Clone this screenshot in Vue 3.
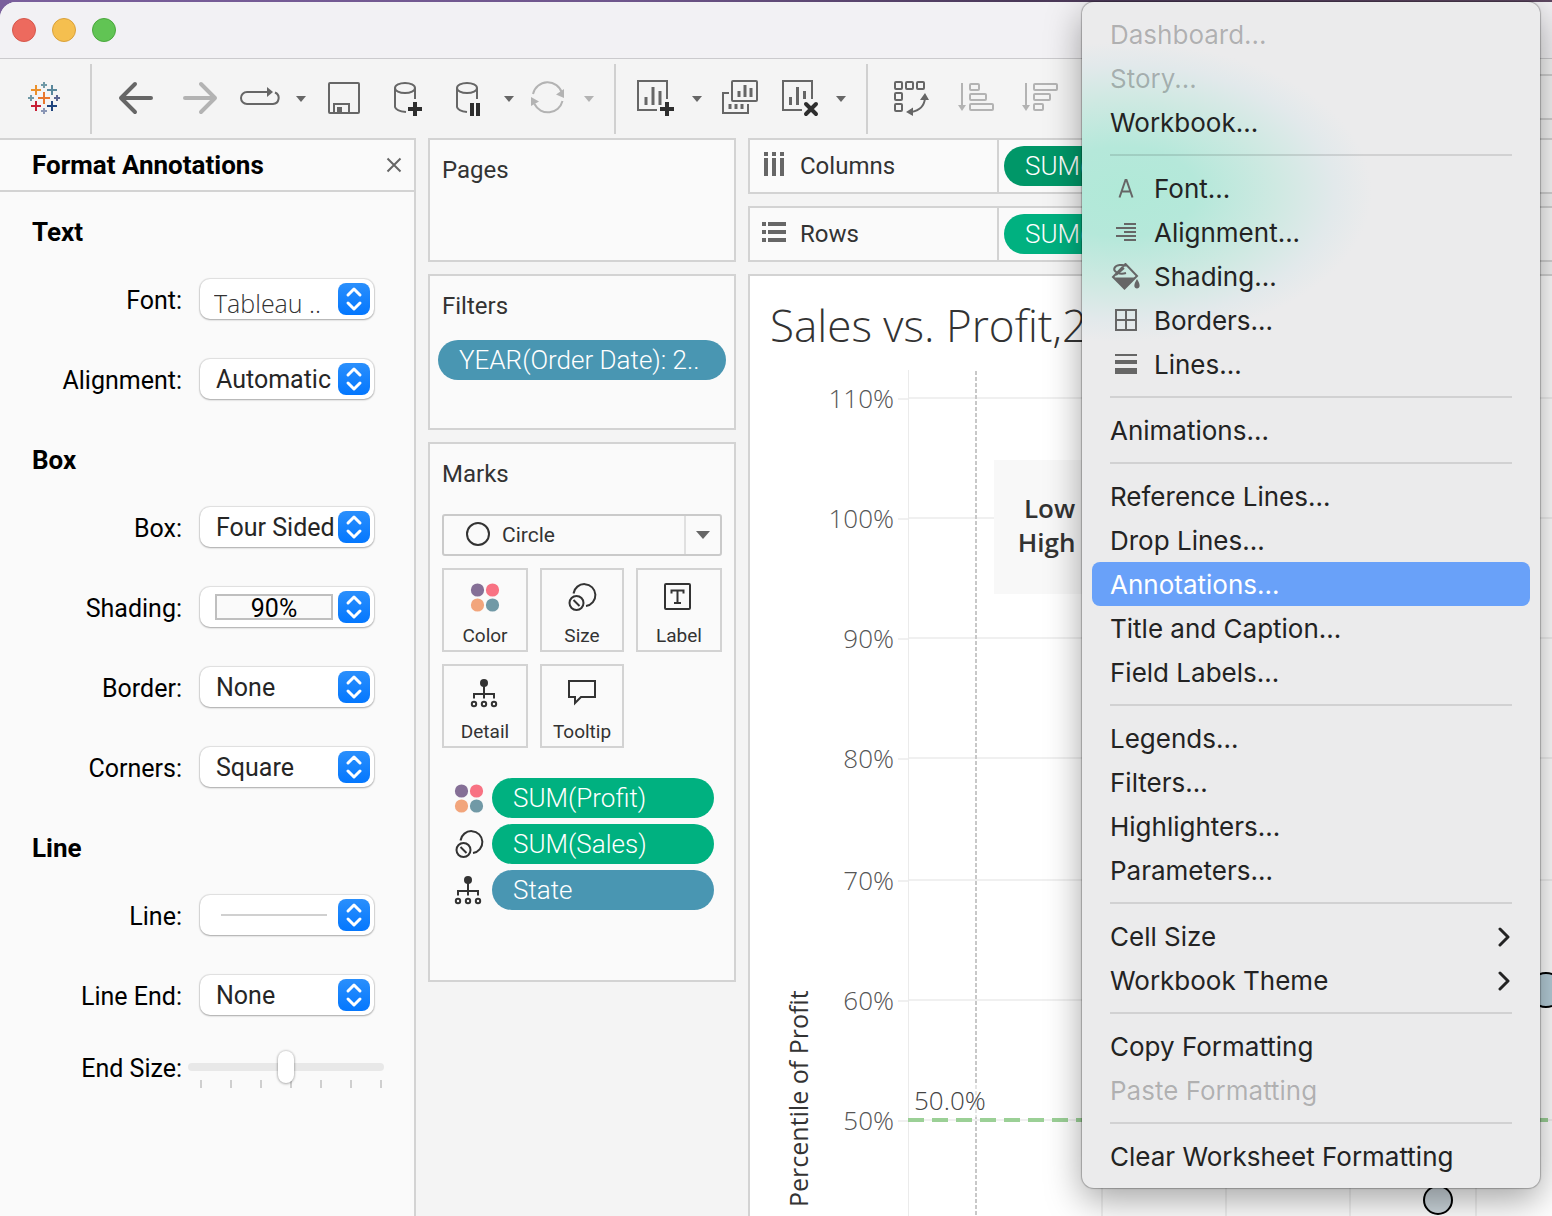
<script setup>
import { ref } from 'vue'

const CARET = 'M0 0h10l-5 6z'

const sections = [
  {
    title: 'Text',
    rows: [
      { id: 'font', label: 'Font:', value: 'Tableau ..', kind: 'face' },
      { id: 'alignment', label: 'Alignment:', value: 'Automatic' },
    ],
  },
  {
    title: 'Box',
    rows: [
      { id: 'box', label: 'Box:', value: 'Four Sided' },
      { id: 'shading', label: 'Shading:', value: '90%', kind: 'swatch' },
      { id: 'border', label: 'Border:', value: 'None' },
      { id: 'corners', label: 'Corners:', value: 'Square' },
    ],
  },
  {
    title: 'Line',
    rows: [
      { id: 'line', label: 'Line:', value: '', kind: 'stroke' },
      { id: 'line-end', label: 'Line End:', value: 'None' },
    ],
  },
]

const endSize = ref(50)

const markButtons = ['Color', 'Size', 'Label', 'Detail', 'Tooltip']

const markPills = [
  { icon: 'Color', text: 'SUM(Profit)', tone: 'green' },
  { icon: 'Size', text: 'SUM(Sales)', tone: 'green' },
  { icon: 'Detail', text: 'State', tone: 'blue' },
]

const percentAxis = [
  { label: '110%', y: 398 },
  { label: '100%', y: 518 },
  { label: '90%', y: 638 },
  { label: '80%', y: 758 },
  { label: '70%', y: 880 },
  { label: '60%', y: 1000 },
  { label: '50%', y: 1120 },
]
const verticalGrid = [1102, 1226, 1350, 1476]

const menu = [
  [
    { text: 'Dashboard...', disabled: true },
    { text: 'Story...', disabled: true },
    { text: 'Workbook...' },
  ],
  [
    { text: 'Font...', icon: 'font' },
    { text: 'Alignment...', icon: 'align' },
    { text: 'Shading...', icon: 'shade' },
    { text: 'Borders...', icon: 'border' },
    { text: 'Lines...', icon: 'lines' },
  ],
  [{ text: 'Animations...' }],
  [
    { text: 'Reference Lines...' },
    { text: 'Drop Lines...' },
    { text: 'Annotations...', active: true },
    { text: 'Title and Caption...' },
    { text: 'Field Labels...' },
  ],
  [
    { text: 'Legends...' },
    { text: 'Filters...' },
    { text: 'Highlighters...' },
    { text: 'Parameters...' },
  ],
  [
    { text: 'Cell Size', submenu: true },
    { text: 'Workbook Theme', submenu: true },
  ],
  [{ text: 'Copy Formatting' }, { text: 'Paste Formatting', disabled: true }],
  [{ text: 'Clear Worksheet Formatting' }],
]
</script>

<template>
  <div class="desktop">
    <svg class="defs" aria-hidden="true">
      <symbol id="mark-Color" viewBox="0 0 30 30">
        <circle cx="7.500" cy="8" r="6.600" fill="#856f96" />
        <circle cx="22.500" cy="8" r="6.600" fill="#f87283" />
        <circle cx="7.500" cy="23" r="6.600" fill="#f2a57c" />
        <circle cx="22.500" cy="23" r="6.600" fill="#7199a6" />
      </symbol>
      <symbol id="mark-Size" viewBox="0 0 30 30">
        <g fill="none" stroke="currentColor" stroke-width="2">
          <path d="M6.500 11.500A11 11 0 1 1 19 24" />
          <circle cx="9.500" cy="21" r="7" />
          <path d="M6.500 18l6 6" />
        </g>
      </symbol>
      <symbol id="mark-Label" viewBox="0 0 30 30">
        <g fill="none" stroke="currentColor" stroke-width="2">
          <rect x="1" y="2" width="25" height="25" rx="1" />
          <path d="M7.500 11.500v-3h12v3M13.500 8.500v12M10 21h7" />
        </g>
      </symbol>
      <symbol id="mark-Detail" viewBox="0 0 30 30">
        <circle cx="14" cy="5" r="4" fill="currentColor" />
        <g fill="none" stroke="currentColor" stroke-width="2">
          <path d="M14 8v12.500M4 20.500v-4.500h20v4.500" />
          <circle cx="4" cy="26" r="2.200" />
          <circle cx="14" cy="26" r="2.200" />
          <circle cx="24" cy="26" r="2.200" />
        </g>
      </symbol>
      <symbol id="mark-Tooltip" viewBox="0 0 30 30">
        <path d="M2 3h26v16H14l-6 6v-6H2z" fill="none" stroke="currentColor" stroke-width="2" />
      </symbol>
    </svg>

    <div class="window">
      <header class="titlebar">
        <button class="light red" aria-label="Close"></button>
        <button class="light yellow" aria-label="Minimize"></button>
        <button class="light green-light" aria-label="Zoom"></button>
      </header>

      <nav class="toolbar" aria-label="Toolbar">
        <button aria-label="Start page">
          <svg width="46" height="40" viewBox="28 79 46 40" fill="none" stroke-width="2">
            <path d="M38 98h12M44 92v12" stroke="#e8762c" />
            <path d="M31 90h10M36 85v10" stroke="#eb912c" />
            <path d="M47 90h10M52 85v10" stroke="#59879b" />
            <path d="M31 106h10M36 101v10" stroke="#c72035" />
            <path d="M47 106h10M52 101v10" stroke="#1f447e" />
            <path d="M41 85h6M44 82v6M28 98h6M31 95v6" stroke="#7099a6" />
            <path d="M41 111h6M44 108v6" stroke="#8a96b5" />
            <path d="M54 98h6M57 95v6" stroke="#5b6591" />
          </svg>
        </button>
        <span class="divider"></span>
        <button aria-label="Undo">
          <svg width="54" height="40" viewBox="108 79 54 40" class="line thick">
            <path d="M151 98H121M135 84l-14 14 14 14" />
          </svg>
        </button>
        <button aria-label="Redo" class="faded">
          <svg width="46" height="40" viewBox="178 79 46 40" class="line thick">
            <path d="M185 98h30M201 84l14 14-14 14" />
          </svg>
        </button>
        <button aria-label="Replay animation">
          <svg width="40" height="40" viewBox="240 79 40 40" class="line">
            <path d="M268 92h-21a6 6 0 0 0 0 12h26a6 6 0 0 0 2-11.500" />
            <path d="M267 87l6 5-6 5z" class="solid" />
          </svg>
        </button>
        <button aria-label="Replay options">
          <svg width="10" height="40" viewBox="0 -17 10 40"><path :d="CARET" class="solid" /></svg>
        </button>
        <button aria-label="Save">
          <svg width="44" height="40" viewBox="322 79 44 40" class="line">
            <rect x="329" y="83" width="30" height="30" rx="1" />
            <path d="M334 113v-9h15v9" />
            <path d="M337 107h5v5h-5z" class="solid" />
          </svg>
        </button>
        <button aria-label="New data source">
          <svg width="48" height="40" viewBox="382 79 48 40" class="line">
            <ellipse cx="405" cy="88" rx="10" ry="5" />
            <path d="M395 88v19q1 4 11 5M415 88v11" />
            <path d="M408 109h14M415 102v14" class="badge" />
          </svg>
        </button>
        <button aria-label="Pause auto updates">
          <svg width="42" height="40" viewBox="446 79 42 40" class="line">
            <ellipse cx="467" cy="88" rx="10" ry="5" />
            <path d="M457 88v19q1 4 10 5M477 88v11" />
            <path d="M472 103v13M478 103v13" class="badge" />
          </svg>
        </button>
        <button aria-label="Auto update options">
          <svg width="10" height="40" viewBox="0 -17 10 40"><path :d="CARET" class="solid" /></svg>
        </button>
        <button aria-label="Run update" class="faded">
          <svg width="38" height="40" viewBox="530 79 38 40" class="line">
            <path d="M533 94a15 15 0 0 1 29-1M562.500 101a15 15 0 0 1-28 3" />
            <path d="M564 89v9l-8-3.500zM531 97v9l8-4.500z" class="solid" />
          </svg>
        </button>
        <button aria-label="Update options" class="faded">
          <svg width="14" height="40" viewBox="0 -17 14 40"><path :d="CARET" class="solid" /></svg>
        </button>
        <span class="divider"></span>
        <button aria-label="New worksheet">
          <svg width="44" height="40" viewBox="632 79 44 40" class="line">
            <path d="M657 110h-19V81h29v18" />
            <path d="M646 97v8M653 87v18M660 91v14" class="bars" />
            <path d="M660 109h14M667 102v14" class="badge" />
          </svg>
        </button>
        <button aria-label="New worksheet options">
          <svg width="10" height="40" viewBox="0 -17 10 40"><path :d="CARET" class="solid" /></svg>
        </button>
        <button aria-label="Duplicate sheet">
          <svg width="46" height="40" viewBox="718 79 46 40" class="line">
            <rect x="732" y="81" width="25" height="20" rx="1" />
            <path d="M739 91v6M745 85v12M751 88v9M730 104v5M736 104v5M742 104v5" class="bars" />
            <path d="M729 93h-6v20h25v-9" />
          </svg>
        </button>
        <button aria-label="Clear sheet">
          <svg width="40" height="40" viewBox="780 79 40 40" class="line">
            <path d="M802 110h-19V81h29v18" />
            <path d="M790.500 97v8M797.500 87v18M804.500 91v8" class="bars" />
            <path d="M806 104l10 10M816 104l-10 10" class="badge round" />
          </svg>
        </button>
        <button aria-label="Clear options">
          <svg width="14" height="40" viewBox="0 -17 14 40"><path :d="CARET" class="solid" /></svg>
        </button>
        <span class="divider"></span>
        <button aria-label="Swap rows and columns">
          <svg width="54" height="40" viewBox="884 79 54 40" class="line">
            <rect x="895" y="82" width="7" height="7" rx="1" />
            <rect x="906" y="82" width="7" height="7" rx="1" />
            <rect x="917" y="82" width="7" height="7" rx="1" />
            <rect x="895" y="93" width="7" height="7" rx="1" />
            <rect x="895" y="104" width="7" height="7" rx="1" />
            <path d="M911 112q13-2 14-14" />
            <path d="M925 93l4 7h-9zM906 112l7-4.500v8.500z" class="solid" />
          </svg>
        </button>
        <button aria-label="Sort ascending" class="faded">
          <svg width="44" height="40" viewBox="954 79 44 40" class="line">
            <path d="M962 83v23" />
            <path d="M958 105h8l-4 6z" class="solid" />
            <rect x="970" y="84" width="9" height="6" rx="1" />
            <rect x="970" y="94" width="16" height="6" rx="1" />
            <rect x="970" y="104" width="23" height="6" rx="1" />
          </svg>
        </button>
        <button aria-label="Sort descending" class="faded">
          <svg width="48" height="40" viewBox="1014 79 48 40" class="line">
            <path d="M1026 83v23" />
            <path d="M1022 105h8l-4 6z" class="solid" />
            <rect x="1034" y="84" width="23" height="6" rx="1" />
            <rect x="1034" y="94" width="16" height="6" rx="1" />
            <rect x="1034" y="104" width="9" height="6" rx="1" />
          </svg>
        </button>
        <span class="fit-box"></span>
      </nav>

      <main class="workspace">
        <aside class="format-panel">
          <div class="panel-head">
            <h1>Format Annotations</h1>
            <button aria-label="Close panel">
              <svg width="16" height="16" viewBox="0 0 16 16" fill="none" stroke="#666" stroke-width="2">
                <path d="M1.500 1.500l13 13M14.500 1.500l-13 13" />
              </svg>
            </button>
          </div>
          <section v-for="s in sections" :key="s.title">
            <h2>{{ s.title }}</h2>
            <div v-for="r in s.rows" :key="r.id" class="field">
              <label :for="r.id">{{ r.label }}</label>
              <span class="popup" :class="r.kind">
                <select :id="r.id">
                  <option>{{ r.value }}</option>
                </select>
                <svg class="stepper" width="32" height="32" viewBox="0 0 32 32" aria-hidden="true">
                  <path d="M10 12l6-6 6 6M10 20l6 6 6-6" />
                </svg>
              </span>
            </div>
          </section>
          <div class="field slider-field">
            <label for="end-size">End Size:</label>
            <span class="slider">
              <input id="end-size" v-model="endSize" type="range" min="0" max="100" />
              <span class="ticks" aria-hidden="true"><i v-for="n in 7" :key="n"></i></span>
            </span>
          </div>
        </aside>

        <div class="cards">
          <section class="card pages"><h3>Pages</h3></section>
          <section class="card filters">
            <h3>Filters</h3>
            <button class="pill blue">YEAR(Order Date): 2..</button>
          </section>
          <section class="card marks">
            <h3>Marks</h3>
            <div class="mark-type">
              <svg width="26" height="26" viewBox="0 0 26 26" aria-hidden="true">
                <circle cx="13" cy="12" r="11" fill="none" stroke="#333" stroke-width="2" />
              </svg>
              <select aria-label="Mark type">
                <option>Circle</option>
              </select>
              <span class="drop" aria-hidden="true">
                <svg width="14" height="8" viewBox="0 0 14 8"><path d="M0 0h14l-7 8z" fill="#666" /></svg>
              </span>
            </div>
            <div class="mark-grid">
              <button v-for="m in markButtons" :key="m">
                <svg width="30" height="30" aria-hidden="true"><use :href="'#mark-' + m" /></svg>
                {{ m }}
              </button>
            </div>
            <ul class="mark-pills">
              <li v-for="p in markPills" :key="p.text">
                <svg width="30" height="30" aria-hidden="true"><use :href="'#mark-' + p.icon" /></svg>
                <button class="pill" :class="p.tone">{{ p.text }}</button>
              </li>
            </ul>
          </section>
        </div>

        <div class="canvas">
          <section class="shelf">
            <h3>
              <svg width="26" height="28" viewBox="0 0 26 28" fill="#666" aria-hidden="true">
                <path d="M2 0h4v4H2zM10 0h4v4h-4zM18 0h4v4h-4zM2 6h4v18H2zM10 6h4v18h-4zM18 6h4v18h-4z" />
              </svg>
              Columns
            </h3>
            <button class="pill green dim">SUM(Sales)</button>
          </section>
          <section class="shelf">
            <h3>
              <svg width="26" height="28" viewBox="0 0 26 28" fill="#666" aria-hidden="true">
                <path d="M0 2h4v4H0zM0 10h4v4H0zM0 18h4v4H0zM6 2h18v4H6zM6 10h18v4H6zM6 18h18v4H6z" />
              </svg>
              Rows
            </h3>
            <button class="pill green">SUM(Profit)</button>
          </section>
          <section class="sheet">
            <h2>Sales vs. Profit,2019</h2>
            <svg class="plot" role="img" aria-label="Sales vs. Profit scatter plot">
              <g transform="translate(-750 -370)">
                <path d="M908.500 370V1400" stroke="#ebebeb" />
                <g stroke="#f0f0f0" stroke-width="2">
                  <path v-for="t in percentAxis" :key="t.y" :d="`M898 ${t.y + 1}h10M909 ${t.y}H2600`" />
                  <path v-for="x in verticalGrid" :key="x" :d="`M${x} 370V1400`" />
                </g>
                <text v-for="t in percentAxis" :key="t.label" x="894" :y="t.y + 10" class="tick">{{ t.label }}</text>
                <path d="M976 371V1400" stroke="#c8c8c8" stroke-width="2" stroke-dasharray="4 2" />
                <path d="M908 1120H2600" stroke="#9bd096" stroke-width="4" stroke-dasharray="16 8" />
                <path d="M910 1085h70v32h-70z" fill="#fff" fill-opacity=".5" />
                <text x="914" y="1110" class="ref">50.0%</text>
                <text transform="translate(808 1207) rotate(-90)" class="axis">Percentile of Profit</text>
                <path d="M994 460h180v134H994z" fill="#f8f8f8" fill-opacity=".95" />
                <text x="1085" y="518" class="note">Low Sales</text>
                <text x="1085" y="552" class="note">High Profit</text>
                <g stroke="#000" stroke-width="2">
                  <circle cx="1546" cy="990" r="17" fill="#b6ced9" />
                  <circle cx="1438" cy="1200" r="14" fill="#ccd6dc" />
                </g>
              </g>
            </svg>
          </section>
        </div>
      </main>
    </div>

    <div class="menu" role="menu" aria-label="Format">
      <div v-for="(group, i) in menu" :key="i" class="group" role="group">
        <button
          v-for="item in group"
          :key="item.text"
          role="menuitem"
          :disabled="item.disabled"
          :class="{ active: item.active }"
        >
          <svg v-if="item.icon" class="glyph" width="32" height="28" viewBox="-2 0 32 28" aria-hidden="true">
            <path v-if="item.icon === 'font'" d="M7.500 22.500L13.500 5h1L20.500 22.500M9.500 16.500h9" class="outline" />
            <path v-if="item.icon === 'align'" d="M12 5h12M4 9h20M12 13h12M4 17h20M12 21h12" class="outline" />
            <template v-if="item.icon === 'shade'">
              <path d="M13.500 1L1 14l11.500 11.500L25 13zM14 10C7 12 1 8.500 2.500 5s8-3.500 12-2.500M4 12L12 5" class="outline" />
              <path d="M2.500 14.500h21L12.500 26zM25 16c4 6 3 9.500 0 9.500s-4-3.500 0-9.500z" />
            </template>
            <path v-if="item.icon === 'border'" d="M4 3h20v20H4zM14 3v20M4 13h20" class="outline" />
            <path v-if="item.icon === 'lines'" d="M3 3h22v2H3zM3 9h22v4H3zM3 17h22v6H3z" />
          </svg>
          <span class="text">{{ item.text }}</span>
          <svg v-if="item.submenu" class="chevron" width="12" height="20" viewBox="0 0 12 20" aria-hidden="true">
            <path d="M2 2l8 8-8 8" />
          </svg>
        </button>
      </div>
    </div>
  </div>
</template>

<style>
body {
  margin: 0;
}
</style>

<style scoped>
* {
  box-sizing: border-box;
}
h1,
h2,
h3,
ul {
  margin: 0;
  padding: 0;
  list-style: none;
}
button,
select {
  margin: 0;
  padding: 0;
  border: 0;
  background: none;
  color: inherit;
  font: inherit;
}
svg {
  display: block;
  flex: none;
}
.desktop {
  position: relative;
  display: flex;
  flex-direction: column;
  height: 100vh;
  padding-top: 2px;
  overflow: hidden;
  background: linear-gradient(90deg, #7a5f9c, #6f568c 40%, #4a3858 66%, #5d4761);
  color: #333;
  font: 24px/32px Roboto, 'Liberation Sans', sans-serif;
}
.defs {
  position: absolute;
  width: 0;
  height: 0;
}
.window {
  display: flex;
  flex: 1;
  flex-direction: column;
  min-height: 0;
  overflow: hidden;
  border-radius: 16px 0 0 0;
  background: #f4f4f4;
}
.titlebar {
  display: flex;
  gap: 16px;
  align-items: center;
  height: 57px;
  padding-left: 12px;
  border-bottom: 1px solid #cbcacd;
  background: #f2f1f4;
}
.light {
  width: 24px;
  height: 24px;
  border: 1px solid #d5574b;
  border-radius: 50%;
  background: #ed6a5e;
}
.yellow {
  border-color: #d9a03a;
  background: #f5bf4f;
}
.green-light {
  border-color: #4aa73c;
  background: #61c454;
}

.toolbar {
  display: flex;
  gap: 16px;
  align-items: center;
  height: 79px;
  padding: 5px 0 4px 28px;
  color: #666;
}
.toolbar .faded {
  color: #b3b3b3;
}
.divider {
  flex: none;
  align-self: stretch;
  width: 2px;
  background: #d0d0d0;
}
.line {
  fill: none;
  stroke: currentColor;
  stroke-width: 2;
}
.thick {
  stroke-width: 4;
  stroke-linecap: round;
  stroke-linejoin: round;
}
.solid {
  fill: currentColor;
  stroke: none;
}
.bars {
  stroke-width: 3;
}
.badge {
  stroke: #2e2e2e;
  stroke-width: 4;
}
.round {
  stroke-linecap: round;
}
.fit-box {
  flex: 1;
  height: 46px;
  margin: 0 0 4px 8px;
  border: solid #d0d0d0;
  border-width: 2px 0;
}

.workspace {
  display: flex;
  flex: 1;
  gap: 12px;
  min-height: 0;
}
.format-panel {
  flex: none;
  width: 416px;
  border: 2px solid #d3d3d3;
  border-width: 2px 2px 0 0;
  background: #fafafa;
  color: #000;
  font-size: 25px;
}
.panel-head {
  display: flex;
  justify-content: space-between;
  align-items: center;
  height: 52px;
  padding: 0 12px 0 32px;
  border-bottom: 2px solid #d3d3d3;
}
.panel-head h1,
.format-panel h2 {
  font-size: 26px;
  font-weight: 700;
}
.format-panel h2 {
  height: 68px;
  padding: 24px 32px 0;
}
.field {
  display: flex;
  gap: 18px;
  align-items: center;
  height: 80px;
  padding-bottom: 2px;
}
.field label {
  width: 182px;
  padding-top: 4px;
  text-align: right;
}
.popup {
  position: relative;
  width: 174px;
  height: 40px;
  border-radius: 10px;
  background: #fff;
  box-shadow: 0 0 1px 1px rgba(0, 0, 0, 0.1), 0 1px 2px rgba(0, 0, 0, 0.25);
}
.popup select {
  position: relative;
  width: 100%;
  height: 40px;
  padding: 2px 36px 0 16px;
  appearance: none;
  color: #262626;
}
.popup.face select {
  padding: 8px 36px 0 14px;
  color: #333;
  font-family: 'Open Sans', 'Noto Sans', sans-serif;
  font-weight: 300;
}
.popup.swatch select {
  padding: 4px 40px 0 14px;
  color: #000;
  text-align-last: center;
}
.popup.swatch::before {
  position: absolute;
  inset: 7px 41px 7px 15px;
  border: 2px solid #bfbfbf;
  background: #fafafa;
  content: '';
}
.popup.stroke::before {
  position: absolute;
  inset: 19px 47px 19px 21px;
  background: #d0d0d0;
  content: '';
}
.stepper {
  position: absolute;
  top: 4px;
  right: 4px;
  border-radius: 8px;
  background: linear-gradient(#2a8ffc, #0477fe);
  fill: none;
  stroke: #fff;
  stroke-width: 3;
  stroke-linecap: round;
  stroke-linejoin: round;
  pointer-events: none;
}
.slider-field {
  gap: 6px;
  height: 64px;
}
.slider {
  position: relative;
  width: 196px;
}
.slider input {
  position: relative;
  z-index: 1;
  display: block;
  width: 100%;
  height: 32px;
  margin: 0;
  appearance: none;
  background: none;
}
.slider input::-webkit-slider-runnable-track {
  height: 8px;
  border-radius: 4px;
  background: #e8e8e8;
}
.slider input::-webkit-slider-thumb {
  width: 16px;
  height: 32px;
  margin-top: -12px;
  appearance: none;
  border-radius: 8px;
  background: #fff;
  box-shadow: 0 0 2px 1px rgba(0, 0, 0, 0.15), 0 1px 3px rgba(0, 0, 0, 0.2);
}
.ticks {
  position: absolute;
  top: 29px;
  right: 2px;
  left: 12px;
  display: flex;
  justify-content: space-between;
}
.ticks i {
  width: 2px;
  height: 8px;
  background: #cfcfcf;
}

.cards {
  display: flex;
  flex: none;
  flex-direction: column;
  gap: 12px;
  width: 308px;
}
.card {
  padding: 14px 12px;
  border: 2px solid #d3d3d3;
  background: #fafafa;
}
h3 {
  font-size: 24px;
  font-weight: 400;
}
.pages {
  height: 124px;
}
.filters {
  height: 156px;
  padding: 14px 8px;
}
.filters h3 {
  padding-left: 4px;
}
.marks {
  height: 540px;
}
.pill {
  height: 40px;
  border-radius: 20px;
  padding: 0 21px;
  color: #fff;
  font-size: 26px;
  font-weight: 300;
  text-align: left;
  white-space: nowrap;
}
.filters .pill {
  width: 100%;
  margin-top: 18px;
}
.blue {
  background: #4996b2;
}
.green {
  background: #00b180;
}
.dim {
  background: #009768;
}
.mark-type {
  display: flex;
  align-items: center;
  height: 42px;
  margin-top: 24px;
  padding-left: 21px;
  border: 2px solid #cacaca;
  border-radius: 3px;
  font-size: 21px;
}
.mark-type select {
  flex: 1;
  height: 38px;
  padding-left: 11px;
  appearance: none;
}
.drop {
  display: flex;
  justify-content: center;
  align-items: center;
  width: 36px;
  height: 38px;
  border-left: 2px solid #e0e0e0;
}
.mark-grid {
  display: grid;
  grid-template-columns: 86fr 84fr 86fr;
  gap: 12px;
  margin-top: 12px;
}
.mark-grid button {
  display: flex;
  flex-direction: column;
  align-items: center;
  height: 84px;
  padding-top: 12px;
  border: 2px solid #d3d3d3;
  font-size: 19px;
  line-height: 24px;
}
.mark-grid svg {
  margin-bottom: 12px;
}
.mark-pills {
  display: flex;
  flex-direction: column;
  gap: 6px;
  margin: 30px 8px 0 12px;
}
.mark-pills li {
  display: flex;
  gap: 8px;
  align-items: center;
}
.mark-pills .pill {
  flex: 1;
}

.canvas {
  display: flex;
  flex: 1;
  flex-direction: column;
  gap: 12px;
  min-width: 0;
}
.shelf {
  display: flex;
  align-items: center;
  height: 56px;
  border: 2px solid #d3d3d3;
  border-right: 0;
  background: #fafafa;
}
.shelf h3 {
  display: flex;
  gap: 12px;
  align-items: center;
  width: 249px;
  height: 52px;
  margin-right: 5px;
  padding-left: 12px;
  border-right: 2px solid #d3d3d3;
}
.shelf .pill {
  width: 220px;
}
.sheet {
  display: flex;
  flex: 1;
  flex-direction: column;
  min-height: 0;
  border: 2px solid #d3d3d3;
  border-width: 2px 0 0 2px;
  background: #fff;
  font-family: 'Open Sans', 'Noto Sans', sans-serif;
}
.sheet h2 {
  height: 94px;
  padding: 22px 20px;
  font-size: 44px;
  font-weight: 300;
  line-height: 54px;
  white-space: nowrap;
}
.plot {
  flex: 1;
  width: 100%;
  min-height: 0;
  font-size: 26px;
}
.tick {
  fill: #555;
  font-weight: 300;
  text-anchor: end;
}
.ref {
  fill: #444;
  font-weight: 300;
}
.axis {
  fill: #333;
  font-size: 25px;
}
.note {
  fill: #333;
  font-weight: 600;
  text-anchor: middle;
}

.menu {
  position: absolute;
  top: 2px;
  right: 12px;
  width: 458px;
  padding: 10px;
  border-radius: 12px;
  background: #ebebec
    radial-gradient(ellipse 250px 150px at 40px 190px, #b1e9d8 0, #b5e8da 30%, #cfe9e2 62%, #e2e9eb 85%, #ebebec 100%);
  box-shadow: 0 0 1px 1px rgba(0, 0, 0, 0.25), 0 12px 36px rgba(0, 0, 0, 0.36);
  color: #232323;
  font: 26px/42px Inter, 'Liberation Sans', sans-serif;
}
.group + .group::before {
  display: block;
  height: 2px;
  margin: 10px 18px;
  background: rgba(0, 0, 0, 0.11);
  content: '';
}
.menu button {
  display: flex;
  align-items: center;
  width: 100%;
  height: 44px;
  padding: 2px 20px 0 18px;
  border-radius: 8px;
  text-align: left;
}
.menu button:disabled {
  color: rgba(0, 0, 0, 0.26);
}
.menu .active {
  background: #69a1f9;
  color: #fff;
}
.menu .text {
  flex: 1;
}
.glyph {
  margin-right: 12px;
  fill: #666;
}
.outline {
  fill: none;
  stroke: #666;
  stroke-width: 2;
}
.chevron {
  fill: none;
  stroke: #232323;
  stroke-width: 3;
  stroke-linecap: round;
  stroke-linejoin: round;
}
</style>
